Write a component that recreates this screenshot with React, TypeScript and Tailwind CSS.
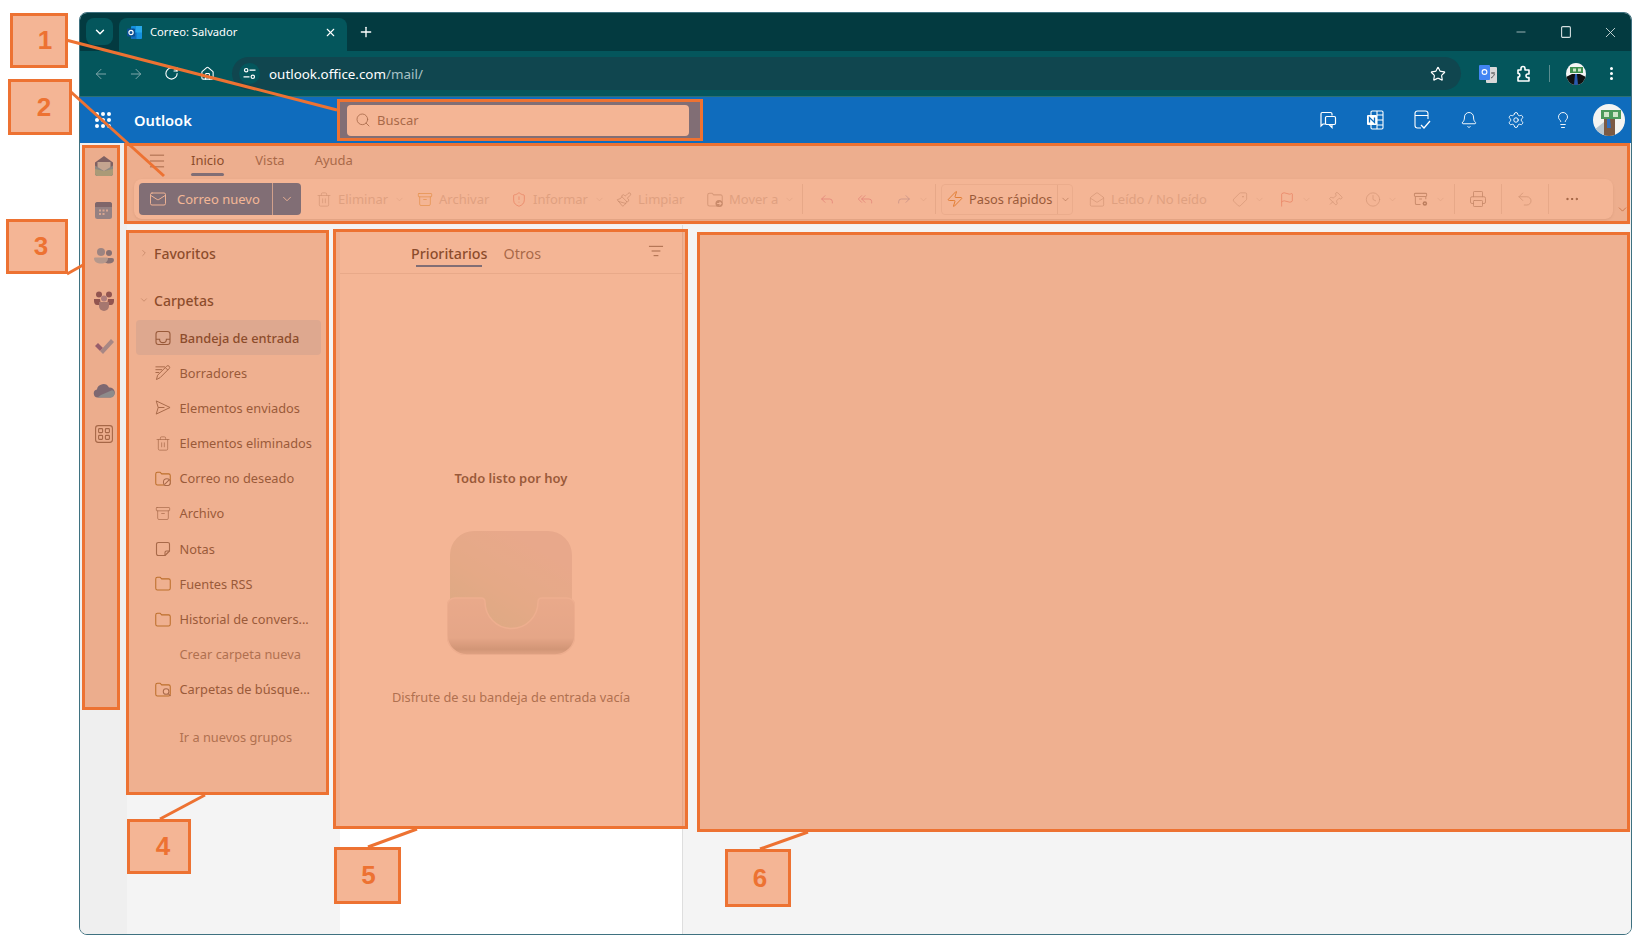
import type { ReactNode } from "react";
import {
  ArrowLeft,
  ArrowRight,
  Archive,
  Bell,
  ChevronDown,
  ChevronRight,
  Clock,
  Ellipsis,
  EllipsisVertical,
  Flag,
  Forward,
  House,
  Lightbulb,
  ListFilter,
  Mail,
  MailOpen,
  Menu,
  Minus,
  Paintbrush,
  Pin,
  Plus,
  Printer,
  Reply,
  ReplyAll,
  RotateCw,
  Search,
  Settings,
  ShieldAlert,
  Square,
  Star,
  Tag,
  Trash2,
  Undo2,
  X,
  Zap,
} from "lucide-react";

function Folder({ badge, color = "#8a6a1f" }: { badge?: "block" | "search" | "move"; color?: string }) {
  return (
    <svg width="17" height="17" viewBox="0 0 17 17" fill="none" stroke={color} strokeWidth="1.1">
      <path d="M.8 3.600C.8 2.600 1.600 1.800 2.600 1.800h2.800l1.700 1.800h7.300c1 0 1.800.8 1.800 1.800v8.100c0 1-.8 1.800-1.800 1.800H2.600c-1 0-1.800-.8-1.800-1.800z" />
      {badge === "block" && (
        <g stroke="#616161" fill="#fff">
          <circle cx="12.600" cy="12.400" r="3.600" />
          <path d="M10.200 14.800l4.800-4.800" />
        </g>
      )}
      {badge === "search" && (
        <g stroke="#616161" fill="#fff">
          <circle cx="11.800" cy="10.600" r="3" />
          <path d="M14 12.800l2.600 2.600" />
        </g>
      )}
      {badge === "move" && (
        <g>
          <circle cx="12.800" cy="12.800" r="3.800" fill="#a8a8a8" stroke="none" />
          <path d="M10.800 12.800h4M13.200 11l1.800 1.800-1.800 1.800" stroke="#fff" />
        </g>
      )}
    </svg>
  );
}

function InboxIcon() {
  return (
    <svg width="16" height="16" viewBox="0 0 16 16" fill="none" stroke="#424242" strokeWidth="1.1">
      <rect x="1" y="1.500" width="14" height="13" rx="2.400" />
      <path d="M1 9.200h3.600a3.400 3.400 0 0 0 6.800 0H15" />
    </svg>
  );
}

function DraftIcon() {
  return (
    <svg width="17" height="17" viewBox="0 0 17 17" fill="none" stroke="#616161" strokeWidth="1.05">
      <path d="M.5 2.500h10M.5 5.500h7M.5 8.500h4" />
      <path d="M1.500 16l1.300-4.600L12.400 1.800a1.800 1.800 0 0 1 2.600 2.600L5.400 14z" />
      <path d="M11 3.300l2.600 2.600" />
    </svg>
  );
}

function SendIcon() {
  return (
    <svg width="17" height="17" viewBox="0 0 17 17" fill="none" stroke="#616161" strokeWidth="1.05" strokeLinejoin="round">
      <path d="M1.300 1.500L16 8.500 1.300 15.500 3.400 8.500z" />
      <path d="M3.400 8.500H10" />
    </svg>
  );
}

function NoteIcon() {
  return (
    <svg width="16" height="16" viewBox="0 0 16 16" fill="none" stroke="#616161" strokeWidth="1.1" strokeLinejoin="round">
      <path d="M3.200 1.500h9.600A1.700 1.700 0 0 1 14.500 3.200V10L10 14.500H3.200A1.700 1.700 0 0 1 1.500 12.800V3.200A1.700 1.700 0 0 1 3.200 1.500z" />
      <path d="M14.500 10H11.500A1.500 1.500 0 0 0 10 11.500V14.500" />
    </svg>
  );
}

function ExtensionIcon() {
  return (
    <svg width="16" height="18" viewBox="0 0 16 18" fill="none" stroke="#fff" strokeWidth="1.6" strokeLinejoin="round">
      <path d="M2 5h3V3.500a2 2 0 0 1 4 0V5h4v4h-1.200a1.800 1.800 0 0 0 0 3.600H13V16H2v-4a1.800 1.800 0 0 0 0-3.600z" />
    </svg>
  );
}

function RulesIcon() {
  return (
    <svg width="17" height="17" viewBox="0 0 17 17" fill="none" stroke="#a8a8a8" strokeWidth="1.1">
      <rect x="1.500" y="2" width="13" height="3.200" rx="1" />
      <path d="M2.500 5.200v7.300c0 .8.6 1.400 1.400 1.400H8M13.600 5.200v3M6.500 8h3" />
      <circle cx="12.600" cy="12.800" r="2.400" fill="#8a8a8a" stroke="none" />
      <circle cx="12.600" cy="12.800" r=".8" fill="#fff" stroke="none" />
    </svg>
  );
}

function OutlookFavicon() {
  return (
    <svg width="15" height="13" viewBox="0 0 15 13">
      <rect x="4" y="0" width="11" height="13" rx="1" fill="#1490df" />
      <rect x="9" y="0" width="6" height="6.500" fill="#28a8ea" />
      <rect x="4" y="6.500" width="5.500" height="6.500" fill="#0f6cbd" />
      <rect x="0" y="2.500" width="8" height="8" rx="1" fill="#0a4f92" />
      <circle cx="4" cy="6.500" r="2.100" fill="none" stroke="#fff" strokeWidth="1.200" />
    </svg>
  );
}

function TranslateIcon() {
  return (
    <svg width="18" height="20" viewBox="0 0 18 20">
      <rect x="7" y="3" width="11" height="16" rx="1" fill="#d8d8d8" />
      <rect x="0" y="1" width="11" height="15" rx="1" fill="#4285f4" />
      <circle cx="5.500" cy="8" r="2.400" fill="none" stroke="#fff" strokeWidth="1.100" />
      <path d="M12 9h4M14 8.500v1.200M15.400 10c-.5 2-2 3.400-3.400 4" fill="none" stroke="#555" strokeWidth="1" />
    </svg>
  );
}

function ChromeAvatar() {
  return (
    <svg width="20" height="22" viewBox="0 0 20 22">
      <clipPath id="chrome-avatar">
        <ellipse cx="10" cy="11" rx="10" ry="11" />
      </clipPath>
      <g clipPath="url(#chrome-avatar)">
        <rect width="20" height="22" fill="#f5f5f5" />
        <rect x="4" y="4" width="13" height="6" fill="#3f8f4f" />
        <rect x="7" y="5.500" width="3" height="3" fill="#cfe6c8" />
        <rect x="12" y="5.500" width="3" height="3" fill="#cfe6c8" />
        <path d="M0 22V14l6-3h8l6 3v8z" fill="#111" />
        <path d="M9 11h2l1 11H8z" fill="#2a5bb0" />
      </g>
    </svg>
  );
}

function HeaderAvatar() {
  return (
    <svg width="32" height="32" viewBox="0 0 32 32">
      <clipPath id="header-avatar">
        <circle cx="16" cy="16" r="16" />
      </clipPath>
      <g clipPath="url(#header-avatar)">
        <rect width="32" height="32" fill="#f4f4f2" />
        <rect x="8" y="6" width="20" height="9" fill="#4c9a5b" />
        <rect x="11" y="8" width="5" height="5" fill="#cfe6c8" />
        <rect x="20" y="8" width="5" height="5" fill="#cfe6c8" />
        <rect x="11" y="15" width="11" height="17" fill="#7b5a44" />
        <path d="M14 15h3l1 9h-4z" fill="#2f6fc0" />
        <path d="M1 26l10-8v14H1z" fill="#b9c6cf" />
      </g>
    </svg>
  );
}

function MailRail() {
  return (
    <svg width="22" height="22" viewBox="0 0 22 22">
      <path d="M11 1l9 6.500V18a3 3 0 0 1-3 3H5a3 3 0 0 1-3-3V7.500z" fill="#0b4f94" />
      <path d="M4.500 7h13v6l-6.500 3.500L4.500 13z" fill="#9bdcf5" />
      <path d="M2 10.500l9 5.500 9-5.500V18a3 3 0 0 1-3 3H5a3 3 0 0 1-3-3z" fill="#2aa0d8" />
      <path d="M2 14l9 2 9-2v4a3 3 0 0 1-3 3H5a3 3 0 0 1-3-3z" fill="#65c7c0" />
    </svg>
  );
}

function CalendarRail() {
  return (
    <svg width="19" height="19" viewBox="0 0 19 19">
      <rect x="1" y="1" width="17" height="17" rx="2.500" fill="#3a93d8" />
      <path d="M1 6V3.500A2.500 2.500 0 0 1 3.500 1h12A2.500 2.500 0 0 1 18 3.500V6z" fill="#0b5aa6" />
      <g fill="#bfe0f7">
        <rect x="5" y="8.500" width="2" height="2" />
        <rect x="8.500" y="8.500" width="2" height="2" />
        <rect x="12" y="8.500" width="2" height="2" />
        <rect x="5" y="12" width="2" height="2" />
        <rect x="8.500" y="12" width="2" height="2" />
      </g>
    </svg>
  );
}

function PeopleRail() {
  return (
    <svg width="20" height="18" viewBox="0 0 20 18">
      <circle cx="7" cy="5" r="4" fill="#4a9ad6" />
      <circle cx="15" cy="6" r="3" fill="#1f6fb4" />
      <path d="M9 11h9a2 2 0 0 1 2 2c0 2-2 3.500-5 3.500S9 15 9 11z" fill="#1f6fb4" />
      <path d="M1 10.500h12a1 1 0 0 1 1 1c0 3-3 5-7 5s-7-2-7-5a1 1 0 0 1 1-1z" fill="#7cc3ec" />
    </svg>
  );
}

function TeamsRail() {
  return (
    <svg width="20" height="20" viewBox="0 0 20 20">
      <circle cx="5" cy="3.500" r="3" fill="#34386f" />
      <circle cx="15" cy="3.500" r="3" fill="#34386f" />
      <path d="M0 8h6l1 6H3c-2 0-3-2-3-4zM20 8h-6l-1 6h4c2 0 3-2 3-4z" fill="#34386f" />
      <circle cx="10" cy="7.500" r="3" fill="#6f8bc9" />
      <path d="M5 11h10v4a5 5 0 0 1-10 0z" fill="#5c7eb0" />
    </svg>
  );
}

function TodoRail() {
  return (
    <svg width="20" height="16" viewBox="0 0 20 16">
      <path d="M1 8l3-3 5 5-3 3z" fill="#3e4aa8" />
      <path d="M6 13l11-12 3 3L9 16 6 13z" fill="#5f9fdc" />
    </svg>
  );
}

function CloudRail() {
  return (
    <svg width="22" height="15" viewBox="0 0 22 15">
      <path d="M4.500 14.500A4 4 0 0 1 3.900 6.600 6.500 6.500 0 0 1 16 4.500a5 5 0 0 1 1.500 10z" fill="#0a5fb4" />
      <path d="M4.500 14.500H18a3.700 3.700 0 0 0 1-7.200L8 12z" fill="#28a8ea" />
    </svg>
  );
}

function AppsRail() {
  return (
    <svg width="18" height="18" viewBox="0 0 18 18" fill="none" stroke="#5c5c5c" strokeWidth="1.100">
      <rect x=".6" y=".6" width="16.800" height="16.800" rx="2.600" />
      <rect x="3.600" y="3.600" width="4" height="4" rx=".8" />
      <rect x="10.400" y="3.600" width="4" height="4" rx=".8" />
      <rect x="3.600" y="10.400" width="4" height="4" rx=".8" />
      <rect x="10.400" y="10.400" width="4" height="4" rx=".8" />
    </svg>
  );
}

function EmptyInbox() {
  return (
    <svg width="128" height="124" viewBox="0 0 128 124">
      <defs>
        <linearGradient id="empty-back" x1="0.2" y1="0.95" x2="0.75" y2="0.2">
          <stop offset="0" stopColor="#cfe8da" />
          <stop offset="0.45" stopColor="#dfe6e0" />
          <stop offset="1" stopColor="#e6e4ea" />
        </linearGradient>
        <linearGradient id="empty-tray" x1="0" y1="0" x2="0" y2="1">
          <stop offset="0" stopColor="#e9e6ea" />
          <stop offset="0.7" stopColor="#dfdfe2" />
          <stop offset="0.9" stopColor="#b8bdbf" />
          <stop offset="1" stopColor="#d8dadb" />
        </linearGradient>
      </defs>
      <rect x="3" y="0" width="122" height="100" rx="24" fill="url(#empty-back)" />
      <path
        d="M8 67H34q4 0 4 4a26 26 0 0 0 53 0q0-4 4-4H120a8 8 0 0 1 8 8V104a20 20 0 0 1-20 20H20A20 20 0 0 1 0 104V75a8 8 0 0 1 8-8Z"
        fill="url(#empty-tray)"
        stroke="#f3f1f2"
        strokeWidth="1.500"
      />
    </svg>
  );
}

function RibbonItem({
  icon,
  label,
  chevron,
  className,
}: {
  icon: ReactNode;
  label?: string;
  chevron?: boolean;
  className: string;
}) {
  return (
    <div className={`flex items-center shrink-0 ${className}`}>
      <span className="w-4 h-4 flex items-center justify-center shrink-0">{icon}</span>
      {label && <span className="ml-[6px] pt-[2px] text-[13px] text-[#d4d4d4] whitespace-nowrap">{label}</span>}
      {chevron && <ChevronDown size={11} strokeWidth={1.25} className="ml-[6px] text-[#d4d4d4]" />}
    </div>
  );
}

function Divider() {
  return <div className="w-px h-[30px] bg-[#e4e4e4] shrink-0" />;
}

const folders: { label: string; icon?: ReactNode; active?: boolean; muted?: boolean }[] = [
  { label: "Bandeja de entrada", icon: <InboxIcon />, active: true },
  { label: "Borradores", icon: <DraftIcon /> },
  { label: "Elementos enviados", icon: <SendIcon /> },
  { label: "Elementos eliminados", icon: <Trash2 size={17} strokeWidth={1.05} className="text-[#616161]" /> },
  { label: "Correo no deseado", icon: <Folder badge="block" /> },
  { label: "Archivo", icon: <Archive size={17} strokeWidth={1.05} className="text-[#616161]" /> },
  { label: "Notas", icon: <NoteIcon /> },
  { label: "Fuentes RSS", icon: <Folder /> },
  { label: "Historial de convers...", icon: <Folder /> },
  { label: "Crear carpeta nueva", muted: true },
  { label: "Carpetas de búsque...", icon: <Folder badge="search" /> },
];

function FolderRow({ label, icon, active, muted }: (typeof folders)[number]) {
  return (
    <div
      className={`flex items-center h-[35.200px] w-[185px] ml-[9px] pl-[19px] gap-[8.500px] rounded text-[12.800px] whitespace-nowrap ${
        active ? "bg-[#d1e3f2] font-medium text-[#242424]" : muted ? "text-[#707070]" : "text-[#424242]"
      }`}
    >
      <span className="w-4 h-4 flex items-center justify-center shrink-0">{icon}</span>
      <span className="pt-px">{label}</span>
    </div>
  );
}

function Mark({ className }: { className: string }) {
  return <div className={`absolute border-[3px] border-[#ed7232] bg-[#ea7233]/[0.52] ${className}`} />;
}

function Callout({ n, className }: { n: number; className: string }) {
  return (
    <div
      className={`absolute flex items-center justify-center border-[3px] border-[#ed7232] bg-[#f4b595] font-['Liberation_Sans',sans-serif] font-bold text-[26px] text-[#ed7232] ${className}`}
    >
      {n}
    </div>
  );
}

export default function App() {
  return (
    <div className="relative w-[1639px] h-[944px] overflow-hidden bg-white pl-[79px] pt-[12px] font-['Noto_Sans',sans-serif]">
      <div className="flex flex-col w-[1553px] h-[923px] border border-[#3f7180] rounded-lg overflow-hidden bg-[#f4f4f4]">
        {/* Chrome tab strip */}
        <div className="flex items-end h-[38px] pl-[6px] bg-[#033a40] text-white shrink-0">
          <div className="flex items-center justify-center w-[27px] h-[27px] mb-[6px] rounded-lg bg-[#04565c]">
            <ChevronDown size={14} strokeWidth={2.5} />
          </div>
          <div className="flex items-center w-[228px] h-[33px] ml-[6px] pl-2 pb-[5px] rounded-t-lg bg-[#04565c]">
            <OutlookFavicon />
            <span className="ml-2 text-[11.200px] whitespace-nowrap">Correo: Salvador</span>
            <X size={13} strokeWidth={2} className="ml-auto mr-[10px]" />
          </div>
          <Plus size={16} strokeWidth={2} className="ml-[11px] mb-[11px]" />
          <div className="flex ml-auto h-full items-center text-[#d5dfe0]">
            <div className="w-[43px] flex justify-center"><Minus size={14} strokeWidth={1.25} /></div>
            <div className="w-[47px] flex justify-center">
              <svg width="10" height="12" viewBox="0 0 10 12" fill="none" stroke="currentColor" strokeWidth="1.100">
                <rect x=".6" y=".6" width="8.800" height="10.800" rx="1.200" />
              </svg>
            </div>
            <div className="w-[42px] flex justify-center"><X size={17} strokeWidth={1.25} /></div>
          </div>
        </div>

        {/* Chrome toolbar */}
        <div className="flex items-center h-[46px] pl-[3px] bg-[#04565c] border-b border-[#2c6f73] text-white shrink-0">
          <div className="w-[35.500px] flex justify-center text-[#7fa6a9]"><ArrowLeft size={16} strokeWidth={1.5} /></div>
          <div className="w-[35.500px] flex justify-center text-[#7fa6a9]"><ArrowRight size={16} strokeWidth={1.5} /></div>
          <div className="w-[35.500px] flex justify-center"><RotateCw size={15} strokeWidth={1.75} /></div>
          <div className="w-[35.500px] flex justify-center"><House size={15} strokeWidth={1.75} /></div>
          <div className="flex items-center w-[1229px] h-[33px] ml-[7px] pl-[7px] rounded-full bg-[#10464f]">
            <div className="flex items-center justify-center w-[21px] h-[21px] rounded-full bg-[#04565c]">
              <svg width="13" height="13" viewBox="0 0 13 13" fill="none" stroke="#fff" strokeWidth="1.200">
                <circle cx="3.200" cy="3.200" r="1.700" />
                <path d="M6.500 3.200H12.500M.5 9.800H6.500" />
                <circle cx="9.800" cy="9.800" r="1.700" />
              </svg>
            </div>
            <span className="ml-[9px] pt-[2px] text-[13.400px] whitespace-nowrap text-white">
              outlook.office.com<span className="text-[#a9c3c6]">/mail/</span>
            </span>
            <Star size={16} strokeWidth={1.75} className="ml-auto mr-[15px]" />
          </div>
          <div className="w-[36px] ml-[9px] flex justify-center"><TranslateIcon /></div>
          <div className="w-[35px] flex justify-center"><ExtensionIcon /></div>
          <div className="w-px h-[17px] ml-[8px] bg-[#5a8d90]" />
          <div className="ml-[16px] flex"><ChromeAvatar /></div>
          <div className="w-[20px] ml-[15px] flex justify-center"><EllipsisVertical size={17} strokeWidth={2.25} /></div>
        </div>

        {/* Outlook header */}
        <div className="flex items-center h-[46px] pl-[15px] bg-[#0f6cbd] text-white shrink-0">
          <div className="grid grid-cols-3 gap-[2.500px] w-4 shrink-0">
            {[0, 1, 2, 3, 4, 5, 6, 7, 8].map((i) => (
              <span key={i} className="w-[3.500px] h-[3.500px] rounded-full bg-white" />
            ))}
          </div>
          <span className="ml-[23px] w-[213px] text-[14.700px] font-semibold">Outlook</span>
          <div className="flex items-center w-[342px] h-[31px] pl-[8px] rounded bg-white text-[#616161]">
            <Search size={16} strokeWidth={1.25} />
            <span className="ml-[6px] pt-[2px] text-[13px]">Buscar</span>
          </div>
          <div className="flex items-center ml-auto pr-[6px]">
            <div className="w-[47px] flex justify-center">
              <svg width="18" height="18" viewBox="0 0 18 18" fill="none" stroke="#fff" strokeWidth="1.200">
                <path d="M3 1.500h8.500a1.500 1.500 0 0 1 1.500 1.500v1.500M6.500 13H4l-2 2V3a1.500 1.500 0 0 1 1-1.500" />
                <rect x="6.500" y="5.500" width="10" height="8" rx="1.200" />
                <path d="M13 13.500v3l-3-3" />
              </svg>
            </div>
            <div className="w-[47px] flex justify-center">
              <svg width="18" height="20" viewBox="0 0 18 20" fill="none" stroke="#fff" strokeWidth="1.100">
                <rect x="5" y="1" width="12" height="18" rx="1.200" />
                <path d="M11 5h6M11 10h6M11 15h6M11 1v18" />
                <rect x="1" y="5" width="10" height="10" rx="1" fill="#fff" stroke="none" />
                <path d="M3.500 12.500v-5l5 5v-5" stroke="#0f6cbd" strokeWidth="1.300" />
              </svg>
            </div>
            <div className="w-[47px] flex justify-center">
              <svg width="18" height="20" viewBox="0 0 18 20" fill="none" stroke="#fff" strokeWidth="1.100">
                <path d="M8 18H4.500A2.500 2.500 0 0 1 2 15.500v-12A2.500 2.500 0 0 1 4.500 1h8A2.500 2.500 0 0 1 15 3.500V9" />
                <path d="M2 5.500h13" />
                <path d="M8 15l3 3 6-7" strokeWidth="1.300" />
              </svg>
            </div>
            <div className="w-[47px] flex justify-center"><Bell size={18} strokeWidth={1.25} /></div>
            <div className="w-[47px] flex justify-center"><Settings size={18} strokeWidth={1.25} /></div>
            <div className="w-[47px] flex justify-center"><Lightbulb size={18} strokeWidth={1.25} /></div>
            <div className="ml-[7px] flex"><HeaderAvatar /></div>
          </div>
        </div>

        <div className="flex flex-1 min-h-0">
          {/* App rail */}
          <div className="flex flex-col items-center w-[47px] bg-[#efefef] shrink-0">
            <div className="h-[45px] flex items-center"><MailRail /></div>
            <div className="h-[45px] flex items-center"><CalendarRail /></div>
            <div className="h-[45px] flex items-center"><PeopleRail /></div>
            <div className="h-[45px] flex items-center"><TeamsRail /></div>
            <div className="h-[45px] flex items-center"><TodoRail /></div>
            <div className="h-[45px] flex items-center"><CloudRail /></div>
            <div className="h-[41px] flex items-center"><AppsRail /></div>
          </div>

          <div className="flex flex-col flex-1 min-w-0">
            {/* Ribbon */}
            <div className="h-[82px] bg-[#f0f0f0] shrink-0">
              <div className="flex items-center h-[36px] pl-[20px] text-[13px] text-[#616161]">
                <Menu size={20} strokeWidth={1} className="text-[#424242]" />
                <div className="relative ml-[24px] text-[#242424]">
                  Inicio
                  <span className="absolute left-0 right-0 -bottom-[5px] h-[3px] rounded bg-[#0f6cbd]" />
                </div>
                <span className="ml-[31px]">Vista</span>
                <span className="ml-[30px]">Ayuda</span>
              </div>
              <div className="flex items-center w-[1479px] h-[40px] ml-[7px] pl-[5px] rounded-lg bg-white shadow-sm">
                <div className="flex items-center w-[162px] h-[32px] rounded bg-[#0f6cbd] text-white shrink-0">
                  <Mail size={18} strokeWidth={1.25} className="ml-[10px]" />
                  <span className="ml-[10px] w-[95px] pt-[2px] text-[13px]">Correo nuevo</span>
                  <div className="flex items-center justify-center flex-1 h-full border-l border-white/70">
                    <ChevronDown size={14} strokeWidth={1.5} />
                  </div>
                </div>
                <div className="w-[15px] shrink-0" />
                <RibbonItem className="w-[101px]" icon={<Trash2 size={17} strokeWidth={1.05} className="text-[#bdbdbd]" />} label="Eliminar" chevron />
                <RibbonItem className="w-[94px]" icon={<Archive size={17} strokeWidth={1.05} className="text-[#e0b060]" />} label="Archivar" />
                <RibbonItem className="w-[105px]" icon={<ShieldAlert size={17} strokeWidth={1.05} className="text-[#e58c8c]" />} label="Informar" chevron />
                <RibbonItem className="w-[91px]" icon={<Paintbrush size={17} strokeWidth={1.05} className="text-[#a8a8a8]" />} label="Limpiar" />
                <RibbonItem className="w-[95px]" icon={<Folder badge="move" color="#c4c4c4" />} label="Mover a" chevron />
                <Divider />
                <div className="w-[16px] shrink-0" />
                <RibbonItem className="w-[38px]" icon={<Reply size={18} strokeWidth={1.1} className="text-[#d98fbd]" />} />
                <RibbonItem className="w-[39px]" icon={<ReplyAll size={18} strokeWidth={1.1} className="text-[#d98fbd]" />} />
                <RibbonItem className="w-[39px]" icon={<Forward size={18} strokeWidth={1.1} className="text-[#99aee0]" />} chevron />
                <Divider />
                <div className="flex items-center w-[132px] h-[31px] ml-[5px] pl-[4px] rounded border border-[#ececec] shrink-0">
                  <Zap size={18} strokeWidth={1.2} className="text-[#d67f1e]" />
                  <span className="ml-[5px] w-[88px] pt-[2px] text-[12.800px] text-[#424242]">Pasos rápidos</span>
                  <div className="flex items-center justify-center flex-1 h-full border-l border-[#e4e4e4]">
                    <ChevronDown size={11} strokeWidth={1.25} className="text-[#616161]" />
                  </div>
                </div>
                <div className="w-[16px] shrink-0" />
                <RibbonItem className="w-[143px]" icon={<MailOpen size={17} strokeWidth={1.05} className="text-[#bdbdbd]" />} label="Leído / No leído" />
                <RibbonItem className="w-[47px]" icon={<Tag size={17} strokeWidth={1.05} className="text-[#bdbdbd] rotate-90" />} chevron />
                <RibbonItem className="w-[48px]" icon={<Flag size={17} strokeWidth={1.05} className="text-[#e58c8c]" />} chevron />
                <RibbonItem className="w-[38px]" icon={<Pin size={17} strokeWidth={1.05} className="text-[#bdbdbd] rotate-45" />} />
                <RibbonItem className="w-[48px]" icon={<Clock size={17} strokeWidth={1.05} className="text-[#bdbdbd]" />} chevron />
                <RibbonItem className="w-[41px]" icon={<RulesIcon />} chevron />
                <Divider />
                <div className="flex justify-center w-[46px] shrink-0"><Printer size={18} strokeWidth={1.1} className="text-[#a0a0a0]" /></div>
                <Divider />
                <div className="flex justify-center w-[46px] shrink-0"><Undo2 size={18} strokeWidth={1.1} className="text-[#bdbdbd]" /></div>
                <Divider />
                <div className="flex justify-center w-[46px] shrink-0"><Ellipsis size={16} strokeWidth={1.5} className="text-[#424242]" /></div>
              </div>
            </div>

            {/* Panes */}
            <div className="flex flex-1 min-h-0">
              <div className="w-[213px] shrink-0 bg-[#f4f4f4] pt-[10px]">
                <div className="flex items-center h-[36px] pl-[12px] text-[#424242]">
                  <ChevronRight size={10} strokeWidth={1.25} className="text-[#707070]" />
                  <span className="ml-[5px] text-[14px] font-medium text-[#242424]">Favoritos</span>
                </div>
                <div className="flex items-center h-[36px] mt-[11px] mb-[2px] pl-[12px]">
                  <ChevronDown size={10} strokeWidth={1.25} className="text-[#707070]" />
                  <span className="ml-[5px] text-[14px] font-medium text-[#242424]">Carpetas</span>
                </div>
                {folders.map((f) => (
                  <FolderRow key={f.label} {...f} />
                ))}
                <div className="mt-[12px]">
                  <FolderRow label="Ir a nuevos grupos" muted />
                </div>
              </div>

              <div className="flex flex-col w-[342px] mt-[6px] bg-white shrink-0">
                <div className="flex items-center h-[43px] pt-[3px] border-b border-[#e6e6e6] relative">
                  <div className="relative ml-[71px] text-[14.300px] font-medium text-[#242424]">
                    Prioritarios
                    <span className="absolute left-[5px] right-[6px] -bottom-[3px] h-[2px] bg-[#0f6cbd]" />
                  </div>
                  <span className="ml-[16px] text-[14.300px] text-[#616161]">Otros</span>
                  <ListFilter size={16} strokeWidth={1.25} className="absolute left-[308px] top-[12px] text-[#424242]" />
                </div>
                <div className="flex flex-col items-center pt-[195px]">
                  <span className="text-[13px] font-semibold text-[#424242]">Todo listo por hoy</span>
                  <div className="mt-[42px] flex"><EmptyInbox /></div>
                  <span className="mt-[33px] text-[12.800px] text-[#707070]">Disfrute de su bandeja de entrada vacía</span>
                </div>
              </div>

              <div className="flex-1 bg-[#f4f4f4] border-l border-[#dedede]" />
            </div>
          </div>
        </div>
      </div>

      {/* Annotation layer */}
      <ChevronDown size={13} strokeWidth={1.25} className="absolute left-[1616px] top-[203px] text-[#8b4c2c]" />
      <Mark className="left-[337px] top-[99px] w-[366px] h-[42px]" />
      <Mark className="left-[124px] top-[143px] w-[1506px] h-[81px]" />
      <Mark className="left-[82px] top-[145px] w-[38px] h-[565px]" />
      <Mark className="left-[126px] top-[230px] w-[203px] h-[565px]" />
      <Mark className="left-[333px] top-[229px] w-[355px] h-[600px]" />
      <Mark className="left-[697px] top-[232px] w-[933px] h-[600px]" />

      <svg className="absolute left-0 top-0 pointer-events-none" width="1639" height="944" fill="none" stroke="#ed7232" strokeWidth="3">
        <path d="M66 40L337 110" />
        <path d="M71 92L164 176" />
        <path d="M67 274L83 265" />
        <path d="M160 819L205 795" />
        <path d="M368 847L417 829" />
        <path d="M760 849L808 832" />
      </svg>

      <Callout n={1} className="left-[10px] top-[13px] w-[58px] h-[55px] pl-3" />
      <Callout n={2} className="left-[8px] top-[79px] w-[64px] h-[56px] pl-2" />
      <Callout n={3} className="left-[6px] top-[219px] w-[62px] h-[55px] pl-2" />
      <Callout n={4} className="left-[127px] top-[819px] w-[64px] h-[55px] pl-2" />
      <Callout n={5} className="left-[334px] top-[847px] w-[67px] h-[57px] pl-[2px]" />
      <Callout n={6} className="left-[725px] top-[849px] w-[66px] h-[58px] pl-1" />
    </div>
  );
}
